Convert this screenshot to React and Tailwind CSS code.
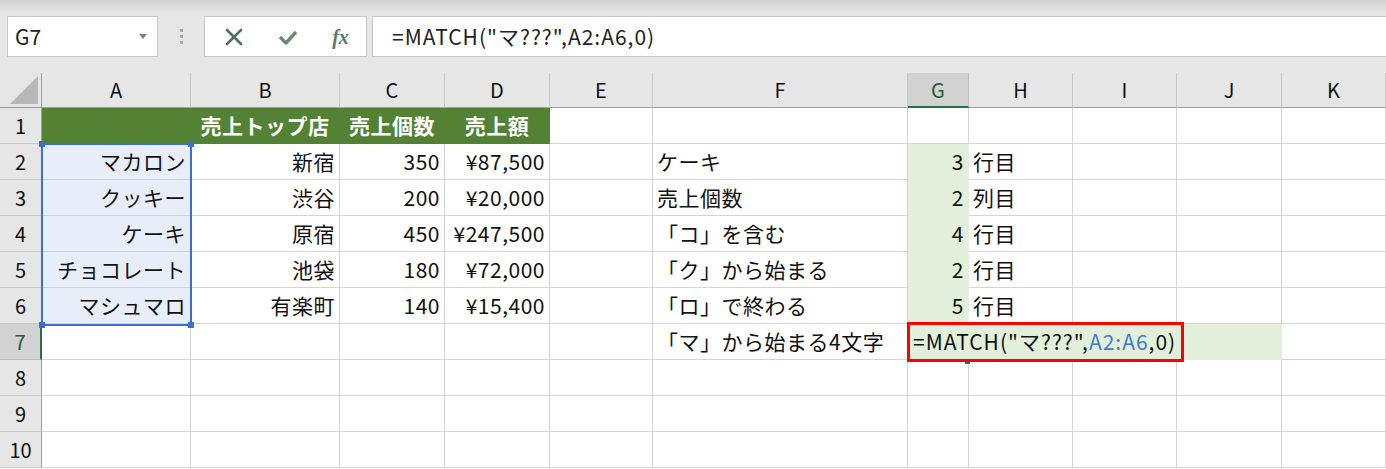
import React from "react";

// 列見出し (選択中は G)
const COLS = ["A", "B", "C", "D", "E", "F", "G", "H", "I", "J", "K"];

// セルのスタイル
const FILL = {
  none: "bg-white border-[#d4d4d4]",
  head: "bg-[#548235] border-[#548235] text-white font-bold",
  green: "bg-[#e2efda] border-[#e2efda]",
  blue: "bg-[#e8eef9] border-[#cdd5e2]",
};

const ALIGN = {
  l: "justify-start pl-[4px]",
  r: "justify-end pr-[4px]",
  c: "justify-center",
};

const c = (t = "", align = "l", fill = "none") => ({ t, align, fill });

const ROWS = [
  [c("", "l", "head"), c("売上トップ店", "c", "head"), c("売上個数", "c", "head"), c("売上額", "c", "head"), c(), c(), c(), c(), c(), c(), c()],
  [c("マカロン", "r", "blue"), c("新宿", "r"), c("350", "r"), c("¥87,500", "r"), c(), c("ケーキ"), c("3", "r", "green"), c("行目"), c(), c(), c()],
  [c("クッキー", "r", "blue"), c("渋谷", "r"), c("200", "r"), c("¥20,000", "r"), c(), c("売上個数"), c("2", "r", "green"), c("列目"), c(), c(), c()],
  [c("ケーキ", "r", "blue"), c("原宿", "r"), c("450", "r"), c("¥247,500", "r"), c(), c("「コ」を含む"), c("4", "r", "green"), c("行目"), c(), c(), c()],
  [c("チョコレート", "r", "blue"), c("池袋", "r"), c("180", "r"), c("¥72,000", "r"), c(), c("「ク」から始まる"), c("2", "r", "green"), c("行目"), c(), c(), c()],
  [c("マシュマロ", "r", "blue"), c("有楽町", "r"), c("140", "r"), c("¥15,400", "r"), c(), c("「ロ」で終わる"), c("5", "r", "green"), c("行目"), c(), c(), c()],
  [c(), c(), c(), c(), c(), c("「マ」から始まる4文字"), c("", "l", "green"), c("", "l", "green"), c("", "l", "green"), c("", "l", "green"), c()],
  [c(), c(), c(), c(), c(), c(), c(), c(), c(), c(), c()],
  [c(), c(), c(), c(), c(), c(), c(), c(), c(), c(), c()],
  [c(), c(), c(), c(), c(), c(), c(), c(), c(), c(), c()],
];

function Toolbar() {
  return (
    <div className="h-[73px] bg-[#e6e6e6] flex flex-col">
      <div className="h-[12px] bg-gradient-to-b from-[#d2d2d2] to-[#e6e6e6]" />
      <div className="mt-[4px] h-[41px] flex items-stretch pl-[7px]">
        {/* 名前ボックス */}
        <div className="w-[151px] bg-white border border-[#c6c6c6] flex items-center justify-between pl-[7px] pr-[10px]">
          <span className="text-[21px] text-[#222]">G7</span>
          <svg width="8" height="5" viewBox="0 0 8 5">
            <path d="M0 0 L8 0 L4 5 Z" fill="#808080" />
          </svg>
        </div>
        <div className="w-[46px] flex flex-col items-center justify-center gap-[3px]">
          <div className="w-[3px] h-[3px] bg-[#a8a8a8]" />
          <div className="w-[3px] h-[3px] bg-[#a8a8a8]" />
          <div className="w-[3px] h-[3px] bg-[#a8a8a8]" />
        </div>
        {/* × ✓ fx */}
        <div className="w-[163px] bg-white border border-[#c6c6c6] flex items-center">
          <div className="w-[55px] flex justify-center pl-[2px]">
            <svg width="18" height="18" viewBox="0 0 18 18">
              <path d="M2 2 L16 16 M16 2 L2 16" stroke="#52705f" strokeWidth="2.6" strokeLinecap="round" />
            </svg>
          </div>
          <div className="w-[55px] flex justify-center">
            <svg width="20" height="16" viewBox="0 0 20 16">
              <path d="M2 8 L8 14 L18 3" stroke="#6a8a70" strokeWidth="3.4" fill="none" strokeLinejoin="round" />
            </svg>
          </div>
          <div className="w-[51px] flex justify-center">
            <span className="font-['Liberation_Serif',serif] italic font-bold text-[20px] text-[#5b7a67]">fx</span>
          </div>
        </div>
        {/* 数式バー */}
        <div className="flex-1 ml-[5px] bg-white border border-[#c6c6c6] border-r-0 flex items-center pl-[19px]">
          <span className="text-[21px] tracking-[1px] text-[#222]">=MATCH("マ???",A2:A6,0)</span>
        </div>
      </div>
    </div>
  );
}

function Sheet() {
  return (
    <div className="relative grid grid-cols-[42px_149px_149px_105px_105px_103px_255px_61px_104px_104px_105px_104px] text-[20px] text-[#111]">
      {/* 左上の角 */}
      <div className="h-[35px] bg-[#e6e6e6] border-r border-b border-[#9e9e9e] flex items-end justify-end pr-[3px] pb-[3px]">
        <svg width="28" height="28" viewBox="0 0 28 28">
          <path d="M28 0 L28 28 L0 28 Z" fill="#b8b8b8" />
        </svg>
      </div>
      {COLS.map((col) =>
        col === "G" ? (
          <div key={col} className="h-[35px] bg-[#d2d2d2] border-r border-r-[#bdbdbd] border-b-2 border-b-[#217346] flex items-center justify-center text-[#1e5e3a]">
            {col}
          </div>
        ) : (
          <div key={col} className="h-[35px] bg-[#e6e6e6] border-r border-r-[#c8c8c8] border-b border-b-[#9e9e9e] flex items-center justify-center text-[#111]">
            {col}
          </div>
        )
      )}

      {ROWS.map((row, i) => (
        <React.Fragment key={i}>
          {i === 6 ? (
            <div className="h-[36px] bg-[#d2d2d2] border-r-2 border-r-[#217346] border-b border-b-[#bdbdbd] flex items-center justify-center text-[#1e5e3a]">
              {i + 1}
            </div>
          ) : (
            <div className="h-[36px] bg-[#e6e6e6] border-r border-r-[#9e9e9e] border-b border-b-[#c8c8c8] flex items-center justify-center">
              {i + 1}
            </div>
          )}
          {row.map((cell, j) => (
            <div
              key={j}
              className={`h-[36px] border-r border-b flex items-center whitespace-nowrap overflow-hidden text-[21px] tracking-[0.5px] ${FILL[cell.fill]} ${ALIGN[cell.align]}`}
            >
              {cell.t}
            </div>
          ))}
        </React.Fragment>
      ))}

      {/* A2:A6 の参照枠 */}
      <div className="absolute left-[41px] top-[70px] w-[151px] h-[183px] border-2 border-[#3c6fcd] pointer-events-none">
        <div className="absolute -left-[4px] -top-[4px] w-[6px] h-[6px] bg-[#3c6fcd]" />
        <div className="absolute -right-[4px] -top-[4px] w-[6px] h-[6px] bg-[#3c6fcd]" />
        <div className="absolute -left-[4px] -bottom-[4px] w-[6px] h-[6px] bg-[#3c6fcd]" />
        <div className="absolute -right-[4px] -bottom-[4px] w-[6px] h-[6px] bg-[#3c6fcd]" />
      </div>

      {/* G7 アクティブセルの下線 */}
      <div className="absolute left-[908px] top-[286px] w-[58px] h-[2px] bg-[#217346]" />
      <div className="absolute left-[965px] top-[286px] w-[5px] h-[5px] bg-[#217346]" />

      {/* 編集中の数式 */}
      <div className="absolute left-[907px] top-[249px] w-[277px] h-[40px] border-[3px] border-[#ff0000] flex items-center pl-[3px] whitespace-nowrap text-[21px] tracking-[1px] text-[#111]">
        <span>=MATCH("マ???",</span>
        <span className="text-[#3f7bd1]">A2:A6</span>
        <span>,0)</span>
      </div>
    </div>
  );
}

export default function App() {
  return (
    <div className="w-[1386px] h-[469px] overflow-hidden bg-white font-['Noto_Sans_CJK_JP','Noto_Sans',sans-serif]">
      <Toolbar />
      <Sheet />
    </div>
  );
}
